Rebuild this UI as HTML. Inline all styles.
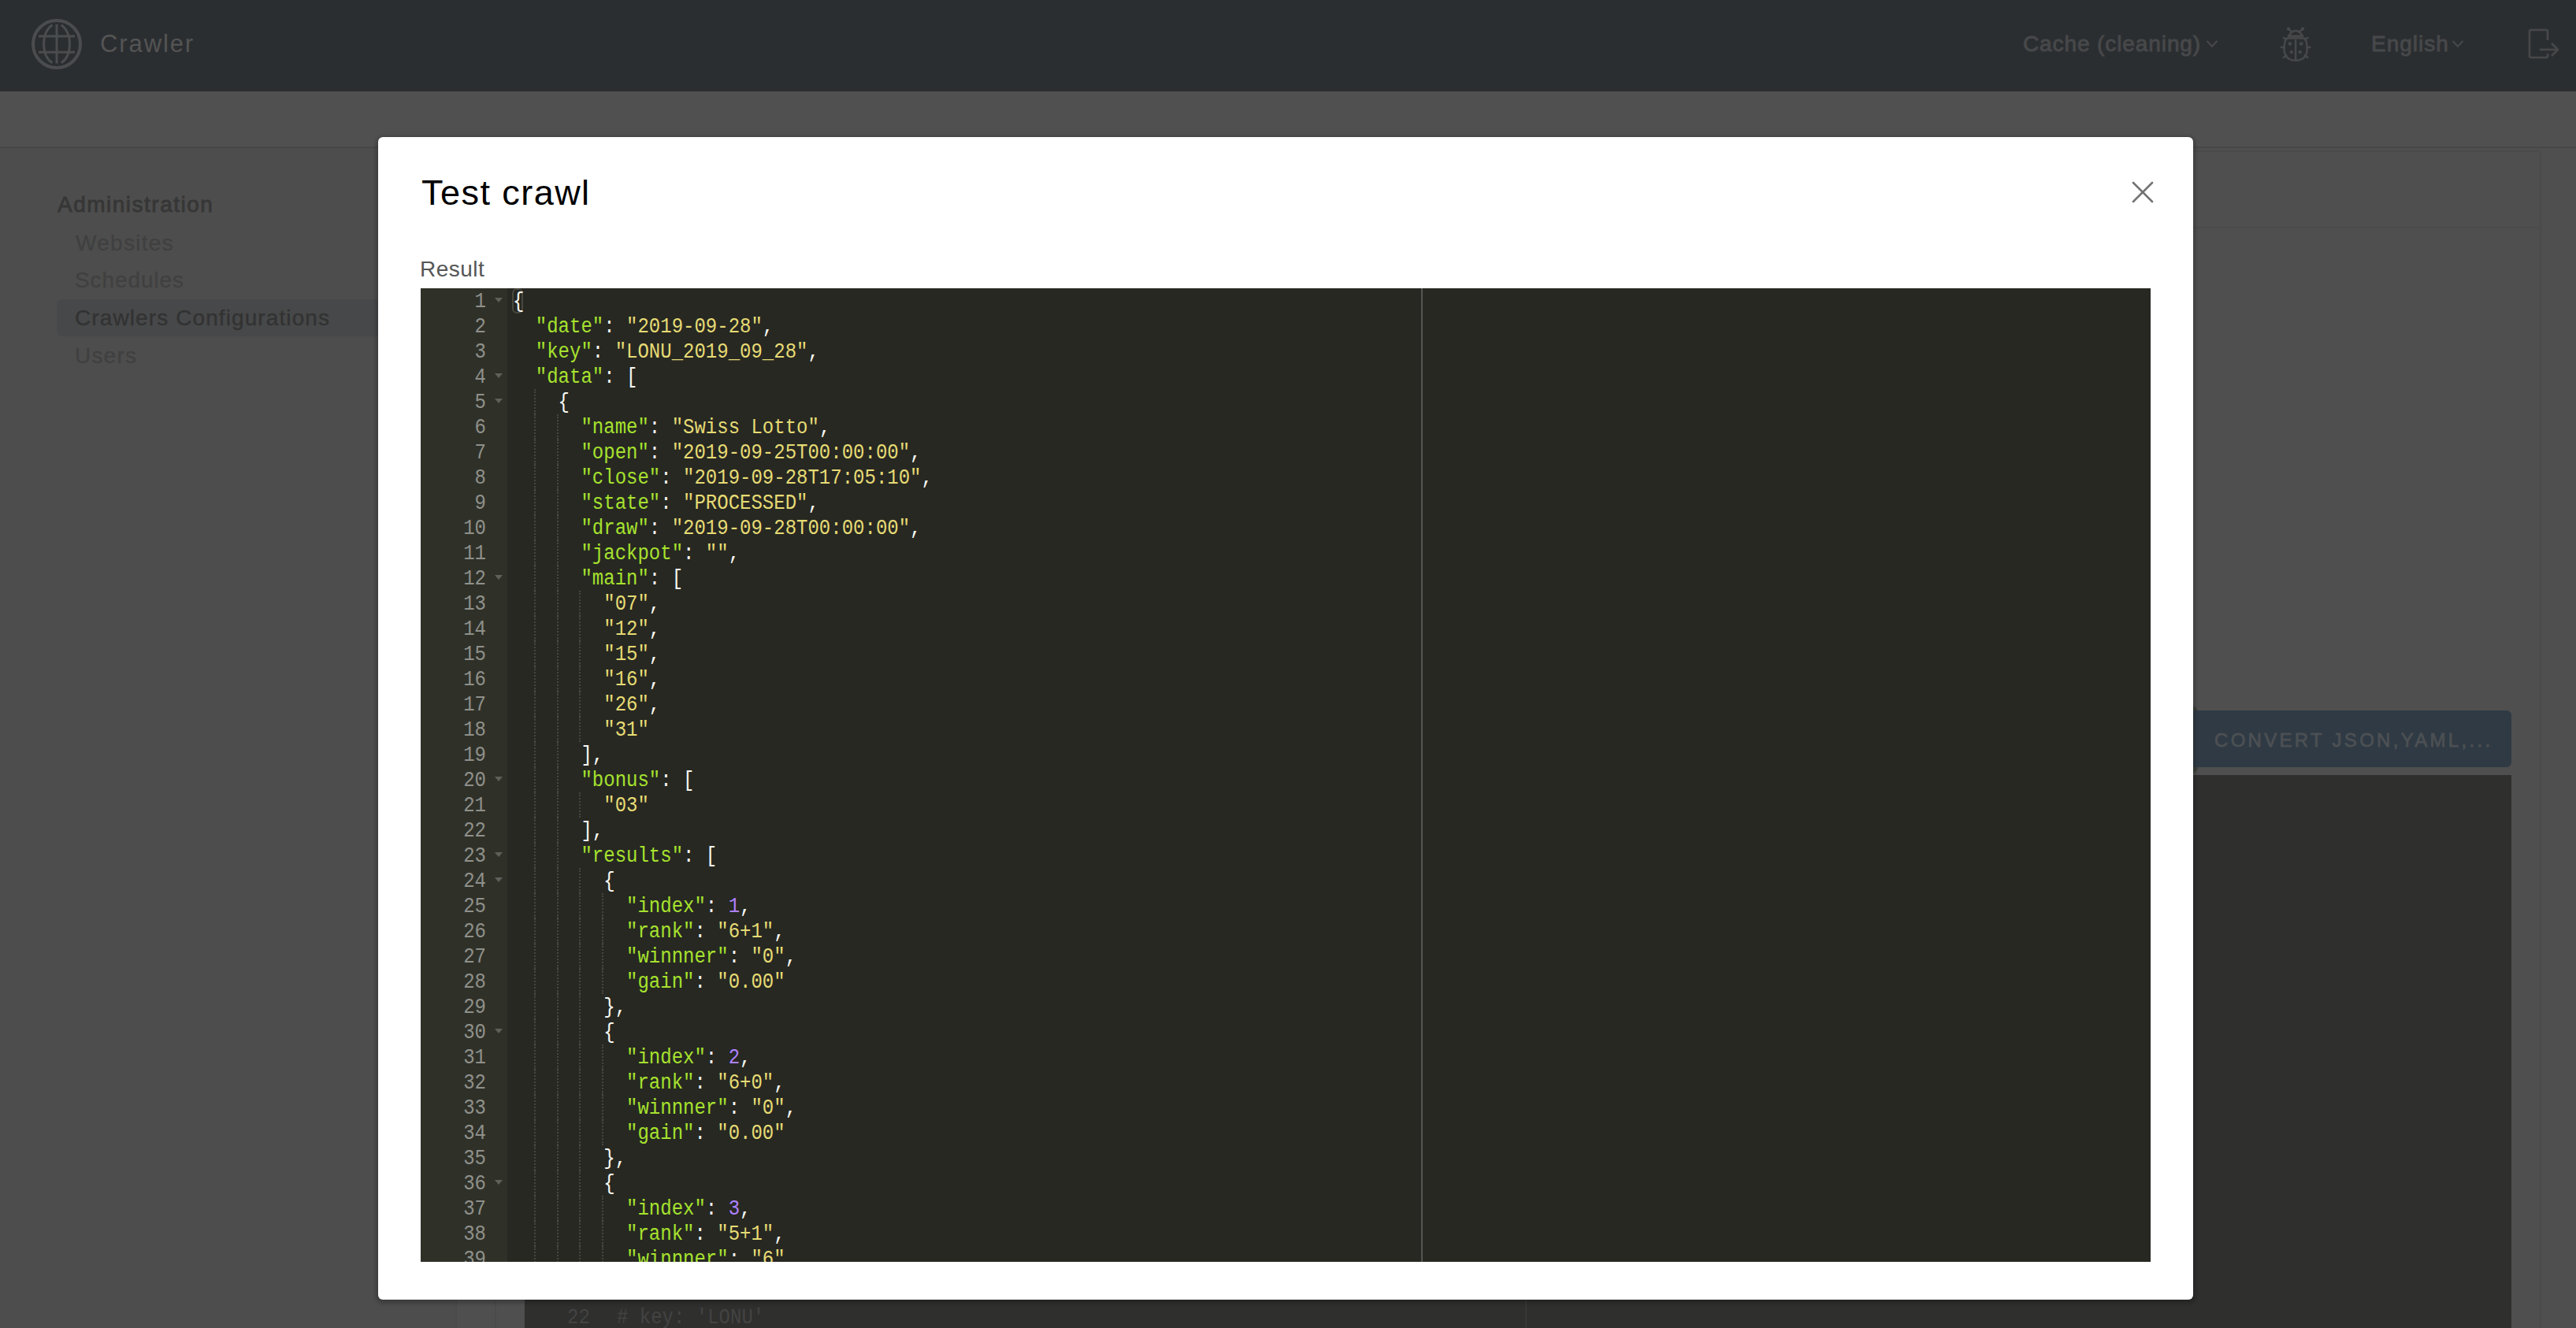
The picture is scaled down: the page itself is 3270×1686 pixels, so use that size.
<!DOCTYPE html>
<html><head><meta charset="utf-8">
<style>
html,body{margin:0;padding:0;}
body{width:3270px;height:1686px;overflow:hidden;position:relative;background:#4f4f4f;font-family:"Liberation Sans",sans-serif;}
.abs{position:absolute;}
.t{position:absolute;white-space:nowrap;line-height:1;}
#nav{left:0;top:0;width:3270px;height:116px;background:#2b2e31;}
#band{left:0;top:116px;width:3270px;height:70px;background:#505050;}
#sidebg{left:0;top:188px;width:579px;height:1500px;background:#4d4d4d;}
#bandline{left:0;top:186px;width:3270px;height:2px;background:#474747;}
.navtxt{color:#47484a;-webkit-text-stroke:0.9px #47484a;}
.side{color:#404040;-webkit-text-stroke:0.3px #404040;}
#hl{left:72px;top:380px;width:507px;height:47px;background:#474849;border-radius:6px 0 0 6px;}
#sideline{left:578px;top:188px;width:2px;height:1500px;background:#4a4a4a;}
#card{left:628px;top:191px;width:2598px;height:1600px;border:2px solid #4a4a4a;border-radius:6px;box-sizing:border-box;}
#cardline{left:630px;top:288px;width:2593px;height:2px;background:#4a4a4a;}
#btn{left:2700px;top:902px;width:488px;height:72px;background:#2f3a44;border-radius:6px;}
#btntxt{color:#4c5053;-webkit-text-stroke:0.8px #4c5053;letter-spacing:3.3px;}
#ued{left:666px;top:984px;width:2522px;height:800px;background:#2f2f2e;}
#uedpm{left:1936px;top:984px;width:2px;height:800px;background:#373736;}
.ued-t{font-family:"Liberation Mono",monospace;color:#434342;}
#modal{left:480px;top:174px;width:2304px;height:1476px;background:#fff;border-radius:6px;box-shadow:0 2px 4px 3px rgba(0,0,0,0.2);}
#editor{left:534px;top:366px;width:2196px;height:1236px;background:#272822;overflow:hidden;}
#gutter{left:0;top:0;width:110px;height:1236px;background:#2f3129;}
.gn{position:absolute;right:27px;width:80px;text-align:right;height:32px;line-height:32px;font-family:"Liberation Mono",monospace;font-size:28px;color:#8f908a;}
.gn{transform-origin:100% 0;transform:scaleX(0.857) translateY(1.2px);}
.fw{position:absolute;left:94px;width:0;height:0;border-left:5px solid transparent;border-right:5px solid transparent;border-top:6px solid #5f605a;margin-top:11.5px;}
#pm{left:1270px;top:0;width:2px;height:1236px;background:#555651;}
#code{left:117px;top:0;width:2000px;height:1236px;}
.ln{position:absolute;left:0;height:32px;line-height:32px;white-space:pre;font-family:"Liberation Mono",monospace;font-size:27px;color:#f8f8f2;transform-origin:0 0;transform:scaleX(0.8889) translateY(1.2px);}
.k{color:#a6e22e;}.s{color:#e6db74;}.n{color:#ae81ff;}.p{color:#f8f8f2;}
.g{position:absolute;width:0;height:32px;border-left:2px dotted #45463f;}
#brk{left:116px;top:0;width:14.4px;height:32px;box-sizing:border-box;border:2px solid #49483e;border-radius:6px;}
</style></head><body>
<div id="nav" class="abs"></div>
<div id="band" class="abs"></div>
<div id="sidebg" class="abs"></div>
<svg class="abs" style="left:38px;top:22px" width="68" height="68" viewBox="0 0 68 68">
 <g fill="none" stroke="#4b4c4e">
  <circle cx="34" cy="34" r="30" stroke-width="4"/>
  <path d="M34 9 V58.6" stroke-width="3"/>
  <path d="M11 23.9 H57" stroke-width="3"/>
  <path d="M11 44.3 H57" stroke-width="3"/>
  <path d="M28.3 9.6 C14 20 14 48 28.3 57.8" stroke-width="3"/>
  <path d="M39.7 9.6 C54 20 54 48 39.7 57.8" stroke-width="3"/>
 </g>
</svg>
<div class="t" style="left:127px;top:40px;font-size:31px;color:#545454;letter-spacing:1.9px;">Crawler</div>
<div class="t navtxt" style="left:2568px;top:42px;font-size:28px;letter-spacing:0.9px;">Cache (cleaning)</div>
<svg class="abs" style="left:2800px;top:50px" width="16" height="12" viewBox="0 0 16 12"><path d="M1.5 2 L8 9 L14.5 2" fill="none" stroke="#47484a" stroke-width="2"/></svg>
<svg class="abs" style="left:2880px;top:20px" width="60" height="70" viewBox="0 0 60 70">
 <g fill="none" stroke="#47484a" stroke-width="2.5" stroke-linecap="round" stroke-linejoin="round">
  <path d="M25 25.8 Q34.1 12 43.2 25.8 Z"/>
  <path d="M25 16.7 L29.5 20.5 M43.1 16.7 L38.6 20.5"/>
  <path d="M23 28.5 H45.2 C49.5 33 49.5 45 47 50 C44.5 55 39 56.8 34.1 56.8 C29.2 56.8 23.7 55 21.2 50 C18.7 45 18.7 33 23 28.5 Z"/>
  <path d="M34.1 31.5 V56"/>
  <path d="M18.9 28 L22.4 30.3 M49.3 28 L45.8 30.3 M15.9 40.1 H19.8 M52.3 40.1 H48.4 M18.9 53 L22.4 50 M49.3 53 L45.8 50"/>
 </g>
 <g fill="#47484a"><circle cx="25" cy="16.7" r="2.1"/><circle cx="43.1" cy="16.7" r="2.1"/><circle cx="26.9" cy="35.6" r="2.3"/><circle cx="41.2" cy="35.6" r="2.3"/><circle cx="28.8" cy="46.2" r="2.1"/><circle cx="39.7" cy="46.2" r="2.1"/></g>
</svg>
<div class="t navtxt" style="left:3010px;top:42px;font-size:28px;letter-spacing:1px;">English</div>
<svg class="abs" style="left:3112px;top:50px" width="16" height="12" viewBox="0 0 16 12"><path d="M1.5 2 L8 9 L14.5 2" fill="none" stroke="#47484a" stroke-width="2"/></svg>
<svg class="abs" style="left:3206px;top:34px" width="46" height="42" viewBox="0 0 46 42">
 <g fill="none" stroke="#47484a" stroke-width="2.6" stroke-linejoin="round">
  <path d="M28 17 V6 Q28 4 26 4 H7 Q5 4 5 6 V37 Q5 39 7 39 H26 Q28 39 28 37 V34"/>
  <path d="M18 29 H40 M33 21 L41 29 L33 37"/>
 </g>
</svg>

<div id="bandline" class="abs"></div>
<div id="sideline" class="abs"></div>
<div class="t side" style="left:73px;top:246px;font-size:28px;color:#363636;-webkit-text-stroke:0.8px #363636;letter-spacing:1.5px;">Administration</div>
<div class="t side" style="left:96px;top:295px;font-size:28px;letter-spacing:1.3px;">Websites</div>
<div id="hl" class="abs"></div>
<div class="t side" style="left:95px;top:342px;font-size:28px;letter-spacing:0.9px;">Schedules</div>
<div class="t side" style="left:95px;top:390px;font-size:28px;letter-spacing:1.1px;color:#323232;-webkit-text-stroke:0.3px #323232;">Crawlers Configurations</div>
<div class="t side" style="left:95px;top:438px;font-size:28px;letter-spacing:1.2px;">Users</div>

<div id="card" class="abs"></div>
<div id="cardline" class="abs"></div>
<div class="abs" style="left:2740px;top:895px;width:50px;height:88px;background:#3b4139;border-radius:10px;"></div>
<div id="btn" class="abs"></div>
<div id="btntxt" class="t" style="left:2811px;top:928px;font-size:24px;">CONVERT JSON,YAML,...</div>
<div id="ued" class="abs"></div>
<div id="uedpm" class="abs"></div>
<div class="t ued-t" style="left:720px;top:1660px;font-size:27px;transform-origin:0 0;transform:scaleX(0.8889);">22</div>
<div class="t ued-t" style="left:783px;top:1660px;font-size:27px;transform-origin:0 0;transform:scaleX(0.8889);">#&nbsp;key:&nbsp;'LONU'</div>

<div id="modal" class="abs"></div>
<div class="t" style="left:535px;top:222px;font-size:45px;color:#000;letter-spacing:1.45px;">Test crawl</div>
<svg class="abs" style="left:2704px;top:228px" width="32" height="32" viewBox="0 0 32 32"><path d="M4 4 L28 28 M28 4 L4 28" stroke="#737373" stroke-width="2.6" stroke-linecap="round"/></svg>
<div class="t" style="left:533px;top:328px;font-size:28px;color:#565656;letter-spacing:0.5px;">Result</div>

<div id="editor" class="abs">
 <div id="gutter" class="abs">
<div class="gn" style="top:0px">1</div>
<div class="fw" style="top:0px"></div>
<div class="gn" style="top:32px">2</div>
<div class="gn" style="top:64px">3</div>
<div class="gn" style="top:96px">4</div>
<div class="fw" style="top:96px"></div>
<div class="gn" style="top:128px">5</div>
<div class="fw" style="top:128px"></div>
<div class="gn" style="top:160px">6</div>
<div class="gn" style="top:192px">7</div>
<div class="gn" style="top:224px">8</div>
<div class="gn" style="top:256px">9</div>
<div class="gn" style="top:288px">10</div>
<div class="gn" style="top:320px">11</div>
<div class="gn" style="top:352px">12</div>
<div class="fw" style="top:352px"></div>
<div class="gn" style="top:384px">13</div>
<div class="gn" style="top:416px">14</div>
<div class="gn" style="top:448px">15</div>
<div class="gn" style="top:480px">16</div>
<div class="gn" style="top:512px">17</div>
<div class="gn" style="top:544px">18</div>
<div class="gn" style="top:576px">19</div>
<div class="gn" style="top:608px">20</div>
<div class="fw" style="top:608px"></div>
<div class="gn" style="top:640px">21</div>
<div class="gn" style="top:672px">22</div>
<div class="gn" style="top:704px">23</div>
<div class="fw" style="top:704px"></div>
<div class="gn" style="top:736px">24</div>
<div class="fw" style="top:736px"></div>
<div class="gn" style="top:768px">25</div>
<div class="gn" style="top:800px">26</div>
<div class="gn" style="top:832px">27</div>
<div class="gn" style="top:864px">28</div>
<div class="gn" style="top:896px">29</div>
<div class="gn" style="top:928px">30</div>
<div class="fw" style="top:928px"></div>
<div class="gn" style="top:960px">31</div>
<div class="gn" style="top:992px">32</div>
<div class="gn" style="top:1024px">33</div>
<div class="gn" style="top:1056px">34</div>
<div class="gn" style="top:1088px">35</div>
<div class="gn" style="top:1120px">36</div>
<div class="fw" style="top:1120px"></div>
<div class="gn" style="top:1152px">37</div>
<div class="gn" style="top:1184px">38</div>
<div class="gn" style="top:1216px">39</div>
 </div>
 <div id="pm" class="abs"></div>
 <div id="brk" class="abs"></div>
 <div id="guides" class="abs" style="left:116px;top:0;"><div class="g" style="left:27.8px;top:128px"></div><div class="g" style="left:27.8px;top:160px"></div><div class="g" style="left:56.6px;top:160px"></div><div class="g" style="left:27.8px;top:192px"></div><div class="g" style="left:56.6px;top:192px"></div><div class="g" style="left:27.8px;top:224px"></div><div class="g" style="left:56.6px;top:224px"></div><div class="g" style="left:27.8px;top:256px"></div><div class="g" style="left:56.6px;top:256px"></div><div class="g" style="left:27.8px;top:288px"></div><div class="g" style="left:56.6px;top:288px"></div><div class="g" style="left:27.8px;top:320px"></div><div class="g" style="left:56.6px;top:320px"></div><div class="g" style="left:27.8px;top:352px"></div><div class="g" style="left:56.6px;top:352px"></div><div class="g" style="left:27.8px;top:384px"></div><div class="g" style="left:56.6px;top:384px"></div><div class="g" style="left:85.4px;top:384px"></div><div class="g" style="left:27.8px;top:416px"></div><div class="g" style="left:56.6px;top:416px"></div><div class="g" style="left:85.4px;top:416px"></div><div class="g" style="left:27.8px;top:448px"></div><div class="g" style="left:56.6px;top:448px"></div><div class="g" style="left:85.4px;top:448px"></div><div class="g" style="left:27.8px;top:480px"></div><div class="g" style="left:56.6px;top:480px"></div><div class="g" style="left:85.4px;top:480px"></div><div class="g" style="left:27.8px;top:512px"></div><div class="g" style="left:56.6px;top:512px"></div><div class="g" style="left:85.4px;top:512px"></div><div class="g" style="left:27.8px;top:544px"></div><div class="g" style="left:56.6px;top:544px"></div><div class="g" style="left:85.4px;top:544px"></div><div class="g" style="left:27.8px;top:576px"></div><div class="g" style="left:56.6px;top:576px"></div><div class="g" style="left:27.8px;top:608px"></div><div class="g" style="left:56.6px;top:608px"></div><div class="g" style="left:27.8px;top:640px"></div><div class="g" style="left:56.6px;top:640px"></div><div class="g" style="left:85.4px;top:640px"></div><div class="g" style="left:27.8px;top:672px"></div><div class="g" style="left:56.6px;top:672px"></div><div class="g" style="left:27.8px;top:704px"></div><div class="g" style="left:56.6px;top:704px"></div><div class="g" style="left:27.8px;top:736px"></div><div class="g" style="left:56.6px;top:736px"></div><div class="g" style="left:85.4px;top:736px"></div><div class="g" style="left:27.8px;top:768px"></div><div class="g" style="left:56.6px;top:768px"></div><div class="g" style="left:85.4px;top:768px"></div><div class="g" style="left:114.2px;top:768px"></div><div class="g" style="left:27.8px;top:800px"></div><div class="g" style="left:56.6px;top:800px"></div><div class="g" style="left:85.4px;top:800px"></div><div class="g" style="left:114.2px;top:800px"></div><div class="g" style="left:27.8px;top:832px"></div><div class="g" style="left:56.6px;top:832px"></div><div class="g" style="left:85.4px;top:832px"></div><div class="g" style="left:114.2px;top:832px"></div><div class="g" style="left:27.8px;top:864px"></div><div class="g" style="left:56.6px;top:864px"></div><div class="g" style="left:85.4px;top:864px"></div><div class="g" style="left:114.2px;top:864px"></div><div class="g" style="left:27.8px;top:896px"></div><div class="g" style="left:56.6px;top:896px"></div><div class="g" style="left:85.4px;top:896px"></div><div class="g" style="left:27.8px;top:928px"></div><div class="g" style="left:56.6px;top:928px"></div><div class="g" style="left:85.4px;top:928px"></div><div class="g" style="left:27.8px;top:960px"></div><div class="g" style="left:56.6px;top:960px"></div><div class="g" style="left:85.4px;top:960px"></div><div class="g" style="left:114.2px;top:960px"></div><div class="g" style="left:27.8px;top:992px"></div><div class="g" style="left:56.6px;top:992px"></div><div class="g" style="left:85.4px;top:992px"></div><div class="g" style="left:114.2px;top:992px"></div><div class="g" style="left:27.8px;top:1024px"></div><div class="g" style="left:56.6px;top:1024px"></div><div class="g" style="left:85.4px;top:1024px"></div><div class="g" style="left:114.2px;top:1024px"></div><div class="g" style="left:27.8px;top:1056px"></div><div class="g" style="left:56.6px;top:1056px"></div><div class="g" style="left:85.4px;top:1056px"></div><div class="g" style="left:114.2px;top:1056px"></div><div class="g" style="left:27.8px;top:1088px"></div><div class="g" style="left:56.6px;top:1088px"></div><div class="g" style="left:85.4px;top:1088px"></div><div class="g" style="left:27.8px;top:1120px"></div><div class="g" style="left:56.6px;top:1120px"></div><div class="g" style="left:85.4px;top:1120px"></div><div class="g" style="left:27.8px;top:1152px"></div><div class="g" style="left:56.6px;top:1152px"></div><div class="g" style="left:85.4px;top:1152px"></div><div class="g" style="left:114.2px;top:1152px"></div><div class="g" style="left:27.8px;top:1184px"></div><div class="g" style="left:56.6px;top:1184px"></div><div class="g" style="left:85.4px;top:1184px"></div><div class="g" style="left:114.2px;top:1184px"></div><div class="g" style="left:27.8px;top:1216px"></div><div class="g" style="left:56.6px;top:1216px"></div><div class="g" style="left:85.4px;top:1216px"></div><div class="g" style="left:114.2px;top:1216px"></div></div>
 <div id="code" class="abs">
<div class="ln" style="top:0px"><span class="p">{</span></div>
<div class="ln" style="top:32px">  <span class="k">&quot;date&quot;</span><span class="p">:</span> <span class="s">&quot;2019-09-28&quot;</span><span class="p">,</span></div>
<div class="ln" style="top:64px">  <span class="k">&quot;key&quot;</span><span class="p">:</span> <span class="s">&quot;LONU_2019_09_28&quot;</span><span class="p">,</span></div>
<div class="ln" style="top:96px">  <span class="k">&quot;data&quot;</span><span class="p">:</span> <span class="p">[</span></div>
<div class="ln" style="top:128px">    <span class="p">{</span></div>
<div class="ln" style="top:160px">      <span class="k">&quot;name&quot;</span><span class="p">:</span> <span class="s">&quot;Swiss Lotto&quot;</span><span class="p">,</span></div>
<div class="ln" style="top:192px">      <span class="k">&quot;open&quot;</span><span class="p">:</span> <span class="s">&quot;2019-09-25T00:00:00&quot;</span><span class="p">,</span></div>
<div class="ln" style="top:224px">      <span class="k">&quot;close&quot;</span><span class="p">:</span> <span class="s">&quot;2019-09-28T17:05:10&quot;</span><span class="p">,</span></div>
<div class="ln" style="top:256px">      <span class="k">&quot;state&quot;</span><span class="p">:</span> <span class="s">&quot;PROCESSED&quot;</span><span class="p">,</span></div>
<div class="ln" style="top:288px">      <span class="k">&quot;draw&quot;</span><span class="p">:</span> <span class="s">&quot;2019-09-28T00:00:00&quot;</span><span class="p">,</span></div>
<div class="ln" style="top:320px">      <span class="k">&quot;jackpot&quot;</span><span class="p">:</span> <span class="s">&quot;&quot;</span><span class="p">,</span></div>
<div class="ln" style="top:352px">      <span class="k">&quot;main&quot;</span><span class="p">:</span> <span class="p">[</span></div>
<div class="ln" style="top:384px">        <span class="s">&quot;07&quot;</span><span class="p">,</span></div>
<div class="ln" style="top:416px">        <span class="s">&quot;12&quot;</span><span class="p">,</span></div>
<div class="ln" style="top:448px">        <span class="s">&quot;15&quot;</span><span class="p">,</span></div>
<div class="ln" style="top:480px">        <span class="s">&quot;16&quot;</span><span class="p">,</span></div>
<div class="ln" style="top:512px">        <span class="s">&quot;26&quot;</span><span class="p">,</span></div>
<div class="ln" style="top:544px">        <span class="s">&quot;31&quot;</span></div>
<div class="ln" style="top:576px">      <span class="p">]</span><span class="p">,</span></div>
<div class="ln" style="top:608px">      <span class="k">&quot;bonus&quot;</span><span class="p">:</span> <span class="p">[</span></div>
<div class="ln" style="top:640px">        <span class="s">&quot;03&quot;</span></div>
<div class="ln" style="top:672px">      <span class="p">]</span><span class="p">,</span></div>
<div class="ln" style="top:704px">      <span class="k">&quot;results&quot;</span><span class="p">:</span> <span class="p">[</span></div>
<div class="ln" style="top:736px">        <span class="p">{</span></div>
<div class="ln" style="top:768px">          <span class="k">&quot;index&quot;</span><span class="p">:</span> <span class="n">1</span><span class="p">,</span></div>
<div class="ln" style="top:800px">          <span class="k">&quot;rank&quot;</span><span class="p">:</span> <span class="s">&quot;6+1&quot;</span><span class="p">,</span></div>
<div class="ln" style="top:832px">          <span class="k">&quot;winnner&quot;</span><span class="p">:</span> <span class="s">&quot;0&quot;</span><span class="p">,</span></div>
<div class="ln" style="top:864px">          <span class="k">&quot;gain&quot;</span><span class="p">:</span> <span class="s">&quot;0.00&quot;</span></div>
<div class="ln" style="top:896px">        <span class="p">}</span><span class="p">,</span></div>
<div class="ln" style="top:928px">        <span class="p">{</span></div>
<div class="ln" style="top:960px">          <span class="k">&quot;index&quot;</span><span class="p">:</span> <span class="n">2</span><span class="p">,</span></div>
<div class="ln" style="top:992px">          <span class="k">&quot;rank&quot;</span><span class="p">:</span> <span class="s">&quot;6+0&quot;</span><span class="p">,</span></div>
<div class="ln" style="top:1024px">          <span class="k">&quot;winnner&quot;</span><span class="p">:</span> <span class="s">&quot;0&quot;</span><span class="p">,</span></div>
<div class="ln" style="top:1056px">          <span class="k">&quot;gain&quot;</span><span class="p">:</span> <span class="s">&quot;0.00&quot;</span></div>
<div class="ln" style="top:1088px">        <span class="p">}</span><span class="p">,</span></div>
<div class="ln" style="top:1120px">        <span class="p">{</span></div>
<div class="ln" style="top:1152px">          <span class="k">&quot;index&quot;</span><span class="p">:</span> <span class="n">3</span><span class="p">,</span></div>
<div class="ln" style="top:1184px">          <span class="k">&quot;rank&quot;</span><span class="p">:</span> <span class="s">&quot;5+1&quot;</span><span class="p">,</span></div>
<div class="ln" style="top:1216px">          <span class="k">&quot;winnner&quot;</span><span class="p">:</span> <span class="s">&quot;6&quot;</span></div>
 </div>
</div>
</body></html>
